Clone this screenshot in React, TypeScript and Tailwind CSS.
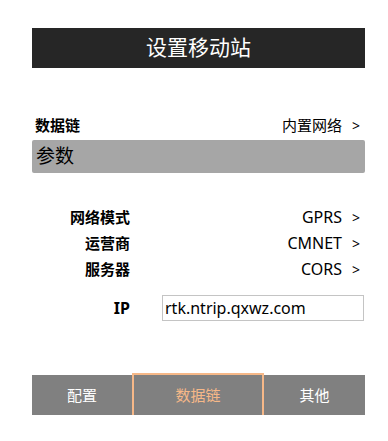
import React from 'react'

const font = { fontFamily: '"Noto Sans", "Noto Sans CJK SC", sans-serif' }

function ParamRow({ label, value }: { label: string; value: string }) {
  return (
    <div className="flex h-[26px] items-center">
      <span className="w-[98px] text-right text-[15px] font-bold text-black">{label}</span>
      <span className="flex-1 text-right text-[16px] text-black">{value}</span>
      <span className="ml-[10px] mr-[5px] text-[14px] text-black">&gt;</span>
    </div>
  )
}

export default function App() {
  const tabs = [
    { title: '配置', width: 'w-[100px]', active: false },
    { title: '数据链', width: 'w-[132px]', active: true },
    { title: '其他', width: 'w-[101px]', active: false },
  ]

  return (
    <div className="w-[388px] h-[441px] bg-white pl-[32px] pr-[23px] pt-[28px] flex flex-col" style={font}>
      {/* ::Title bar */}
      <div className="h-[40px] bg-[#262626] flex items-center justify-center text-white text-[21px]">
        设置移动站
      </div>

      {/* ::Data link row */}
      <div className="mt-[47px] h-[20px] flex items-center">
        <span className="ml-[3px] text-[15px] font-bold text-black">数据链</span>
        <span className="flex-1 text-right text-[15px] text-black">内置网络</span>
        <span className="ml-[10px] mr-[5px] text-[14px] text-black">&gt;</span>
      </div>

      {/* ::Section header */}
      <div className="mt-[5px] h-[33px] bg-[#a6a6a6] rounded-[2px] flex items-center pl-[4px] text-[19px] text-black">
        参数
      </div>

      {/* ::Parameters */}
      <div className="mt-[31px] flex flex-col">
        <ParamRow label="网络模式" value="GPRS" />
        <ParamRow label="运营商" value="CMNET" />
        <ParamRow label="服务器" value="CORS" />
      </div>

      {/* ::IP input */}
      <div className="mt-[13px] flex items-center h-[26px]">
        <span className="w-[98px] text-right text-[16px] font-bold text-black">IP</span>
        <div className="ml-[32px] w-[202px] h-[26px] border border-[#c4c4c4] flex items-center pl-[2px] text-[16px] text-black">
          rtk.ntrip.qxwz.com
        </div>
      </div>

      {/* ::Bottom tabs */}
      <div className="mt-[52px] flex items-end">
        {tabs.map((tab) =>
          tab.active ? (
            <div
              key={tab.title}
              className={`${tab.width} h-[42px] bg-[#808080] border-t-2 border-x-2 border-[#f6b888] flex items-center justify-center text-[15px] text-[#f6b888]`}
            >
              {tab.title}
            </div>
          ) : (
            <div
              key={tab.title}
              className={`${tab.width} h-[40px] bg-[#808080] flex items-center justify-center text-[15px] text-white`}
            >
              {tab.title}
            </div>
          )
        )}
      </div>
    </div>
  )
}
